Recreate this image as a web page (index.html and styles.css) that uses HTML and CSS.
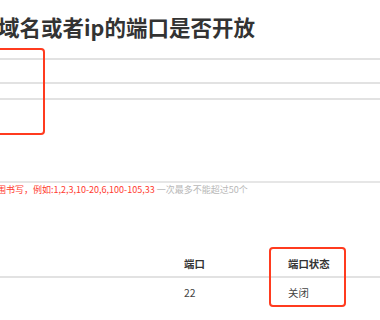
FILE: index.html
```html
<!DOCTYPE html>
<html lang="zh-CN">
<head>
    <meta charset="UTF-8">
    <title>端口检测</title>
    <link rel="stylesheet" href="styles.css">
</head>
<body>

    <div class="page">
        <h1 class="title">域名或者ip的端口是否开放</h1>

        <div class="form">
            <div class="form-row row-host"></div>
            <div class="form-row row-mid"></div>
            <div class="form-row row-ports"></div>
            <div class="mark mark-input"></div>
        </div>

        <p class="tip"><span class="tip-red">围书写，例如:1,2,3,10-20,6,100-105,33</span> <span class="tip-gray">一次最多不能超过50个</span></p>

        <div class="result">
            <table class="Table">
                <thead>
                <tr>
                    <th class="col-host"></th>
                    <th class="col-port">端口</th>
                    <th class="col-state">端口状态</th>
                </tr>
                </thead>
                <tbody>
                <tr>
                    <td class="col-host"></td>
                    <td class="col-port">22</td>
                    <td class="col-state">关闭</td>
                </tr>
                </tbody>
            </table>
            <div class="mark mark-state"></div>
        </div>
    </div>

</body>
</html>
```

FILE: styles.css
```css
body {
    margin: 0;
    padding: 0;
    background: #fff;
    font-family: "Noto Sans CJK SC", "Noto Sans", sans-serif;
    color: #333;
}

.page {
    width: 380px;
    overflow: hidden;
}

.title {
    margin: 12px 0 0 -2px;
    font-size: 21.5px;
    line-height: 30px;
    font-weight: bold;
    color: #333;
}

.form {
    position: relative;
    margin-top: 16px;
}

.form-row {
    border-top: 2px solid #e2e2e2;
}

.row-host {
    height: 22px;
}

.row-mid {
    height: 14px;
}

.row-ports {
    height: 81px;
    border-bottom: 2px solid #e6e6e6;
}

.mark {
    position: absolute;
    border: 2px solid #ff3b1f;
    border-radius: 4px;
}

.mark-input {
    top: -10px;
    left: -10px;
    width: 51px;
    height: 83px;
}

.tip {
    margin: 0 0 0 -3px;
    font-size: 9px;
    line-height: 14px;
    white-space: nowrap;
}

.tip-red {
    color: #ff3b30;
}

.tip-gray {
    color: #b8b8b8;
}

.result {
    position: relative;
    margin-top: 53px;
}

table.Table {
    width: 100%;
    border-collapse: collapse;
    font-size: 10.4px;
}

table.Table th, table.Table td {
    text-align: left;
    padding: 0;
    white-space: nowrap;
}

table.Table th {
    height: 26px;
    font-weight: bold;
    color: #333;
    border-bottom: 2px solid #e2e2e2;
    vertical-align: middle;
}

table.Table td {
    height: 29px;
    color: #444;
}

.col-host {
    width: 184px;
}

.col-port {
    width: 104px;
}

.mark-state {
    top: -3px;
    left: 269px;
    width: 73px;
    height: 56px;
}
```
